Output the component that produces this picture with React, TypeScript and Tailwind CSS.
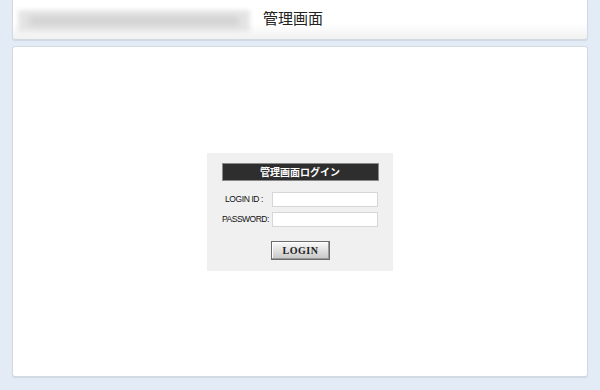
export default function App() {
  return (
    <div className="flex h-[390px] w-[600px] flex-col gap-[6px] overflow-hidden bg-[#e2ebf6] px-[12px] pb-[13px] font-['Liberation_Sans','Noto_Sans_CJK_JP',sans-serif]">
      {/* header */}
      <header className="flex h-[40px] shrink-0 items-center gap-[13px] rounded-b-[3px] border border-t-0 border-[#d3d9e0] bg-gradient-to-b from-white from-60% to-[#f1f1f1] pl-[5px] shadow-[0_1px_1px_rgba(0,0,0,0.08)]">
        <div className="mt-[2px] h-[22px] w-[232px] bg-[#e6e6e6] blur-[2px]">
          <div className="mx-[10px] mt-[7px] h-[8px] rounded bg-[#cdcdcd] blur-[3px]" />
        </div>
        <h1 className="text-[15px] font-normal text-[#222]">管理画面</h1>
      </header>

      {/* main */}
      <main className="flex flex-1 items-center justify-center rounded-[3px] border border-[#d3d9e0] bg-white pt-[1px] shadow-[0_1px_1px_rgba(0,0,0,0.08)]">
        <div className="flex w-[186px] flex-col items-center bg-[#f0f0f0] pt-[10px] pb-[11px]">
          <div className="flex h-[18px] w-[157px] items-center justify-center border border-[#8a8a8a] bg-[#2e2e2e] text-[10px] font-bold text-white">
            管理画面ログイン
          </div>
          <div className="mt-[11px] flex w-[156px] flex-col gap-[5px] text-[8.5px] tracking-[-0.4px] text-[#111]">
            <div className="flex items-center">
              <span className="flex-1 whitespace-nowrap pl-[3px]">LOGIN ID :</span>
              <input className="h-[15px] w-[106px] shrink-0 border border-[#d6d6d6] bg-white" />
            </div>
            <div className="flex items-center">
              <span className="flex-1 whitespace-nowrap tracking-[-0.5px]">PASSWORD:</span>
              <input className="h-[15px] w-[106px] shrink-0 border border-[#d6d6d6] bg-white" />
            </div>
          </div>
          <button className="mt-[14px] ml-[1px] h-[19px] w-[59px] border border-[#6b6b6b] bg-gradient-to-b from-[#fafafa] to-[#c6c6c6] font-['Liberation_Serif',serif] text-[10px] font-bold tracking-[0.5px] text-[#222] shadow-[inset_-1px_-1px_0_#999,inset_1px_1px_0_#fff]">
            LOGIN
          </button>
        </div>
      </main>
    </div>
  );
}
